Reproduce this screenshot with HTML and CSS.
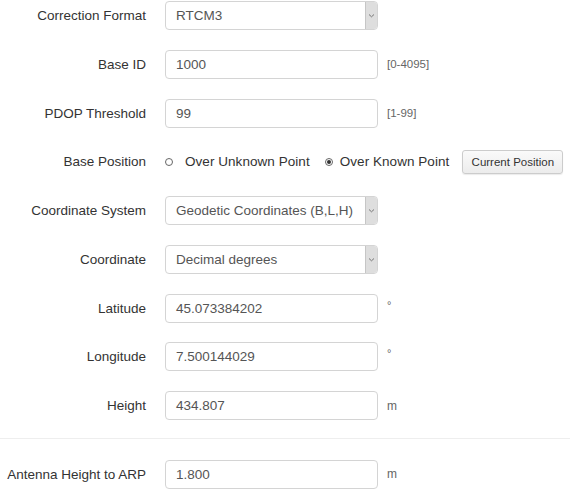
FILE: index.html
```html
<!DOCTYPE html>
<html>
<head>
<meta charset="utf-8">
<link rel="stylesheet" href="styles.css">
</head>
<body>
<form class="form">
  <div class="row">
    <label class="label">Correction Format</label>
    <div class="select"><span class="value">RTCM3</span><span class="arrow"><svg width="7" height="5" viewBox="0 0 7 5"><path d="M1 1.5 L3.5 3.8 L6 1.5" fill="none" stroke="#777" stroke-width="1"/></svg></span></div>
  </div>
  <div class="row">
    <label class="label">Base ID</label>
    <div class="input">1000</div>
    <span class="help">[0-4095]</span>
  </div>
  <div class="row">
    <label class="label">PDOP Threshold</label>
    <div class="input">99</div>
    <span class="help">[1-99]</span>
  </div>
  <div class="row">
    <label class="label">Base Position</label>
    <div class="radios">
      <span class="radio"></span><span class="radio-text">Over Unknown Point</span>
      <span class="radio checked"></span><span class="radio-text">Over Known Point</span>
      <button type="button" class="btn">Current Position</button>
    </div>
  </div>
  <div class="row">
    <label class="label">Coordinate System</label>
    <div class="select"><span class="value">Geodetic Coordinates (B,L,H)</span><span class="arrow"><svg width="7" height="5" viewBox="0 0 7 5"><path d="M1 1.5 L3.5 3.8 L6 1.5" fill="none" stroke="#777" stroke-width="1"/></svg></span></div>
  </div>
  <div class="row">
    <label class="label">Coordinate</label>
    <div class="select"><span class="value">Decimal degrees</span><span class="arrow"><svg width="7" height="5" viewBox="0 0 7 5"><path d="M1 1.5 L3.5 3.8 L6 1.5" fill="none" stroke="#777" stroke-width="1"/></svg></span></div>
  </div>
  <div class="row">
    <label class="label">Latitude</label>
    <div class="input">45.073384202</div>
    <span class="unit deg">°</span>
  </div>
  <div class="row">
    <label class="label">Longitude</label>
    <div class="input">7.500144029</div>
    <span class="unit deg">°</span>
  </div>
  <div class="row">
    <label class="label">Height</label>
    <div class="input">434.807</div>
    <span class="unit">m</span>
  </div>
  <hr class="sep">
  <div class="row">
    <label class="label">Antenna Height to ARP</label>
    <div class="input">1.800</div>
    <span class="unit">m</span>
  </div>
</form>
</body>
</html>
```

FILE: styles.css
```css
html, body {
  margin: 0;
  padding: 0;
  background: #fff;
}
body {
  font-family: "Liberation Sans", Arial, sans-serif;
  font-size: 13.5px;
  color: #333;
}
.form {
  padding-top: 1px;
}
.row {
  display: flex;
  align-items: center;
  height: 29px;
  margin-bottom: 19.75px;
}
.label {
  width: 146px;
  flex: none;
  text-align: right;
  margin-right: 19px;
  color: #333;
}
.input, .select {
  box-sizing: border-box;
  width: 213px;
  height: 29px;
  border: 1px solid #d4d4d4;
  border-radius: 4px;
  padding: 0 10px;
  display: flex;
  align-items: center;
  color: #555;
  flex: none;
}
.select {
  padding-right: 0;
  justify-content: space-between;
}
.arrow {
  width: 11px;
  height: 27px;
  background: #dedede;
  border-left: 1px solid #c6c6c6;
  border-radius: 0 3px 3px 0;
  display: flex;
  align-items: center;
  justify-content: center;
}
.help {
  margin-left: 9px;
  font-size: 11.5px;
  color: #666;
}
.unit {
  margin-left: 9px;
  font-size: 12px;
  color: #666;
}
.unit.deg {
  font-size: 11px;
  align-self: flex-start;
  margin-top: 5px;
}
.radios {
  display: flex;
  align-items: center;
}
.radio {
  box-sizing: border-box;
  width: 8px;
  height: 8px;
  border: 1px solid #666;
  border-radius: 50%;
  margin-right: 12px;
  display: inline-flex;
  align-items: center;
  justify-content: center;
  flex: none;
}
.radio-text + .radio {
  margin-left: 15px;
  margin-right: 7px;
}
.radio.checked::after {
  content: "";
  width: 4px;
  height: 4px;
  border-radius: 50%;
  background: #333;
}
.radio-text {
  color: #333;
  letter-spacing: 0.05px;
}
.btn {
  margin-left: 13px;
  height: 24px;
  width: 101px;
  box-sizing: border-box;
  border: 1px solid #cccccc;
  border-radius: 3px;
  background: linear-gradient(#fafafa, #ececec);
  font-family: "Liberation Sans", Arial, sans-serif;
  font-size: 11.5px;
  color: #333;
  padding: 0;
  box-shadow: 0 1px 1px rgba(0,0,0,0.08);
}
.sep {
  border: 0;
  border-top: 1px solid #eeeeee;
  margin: -2px 0 21px 0;
}
```
